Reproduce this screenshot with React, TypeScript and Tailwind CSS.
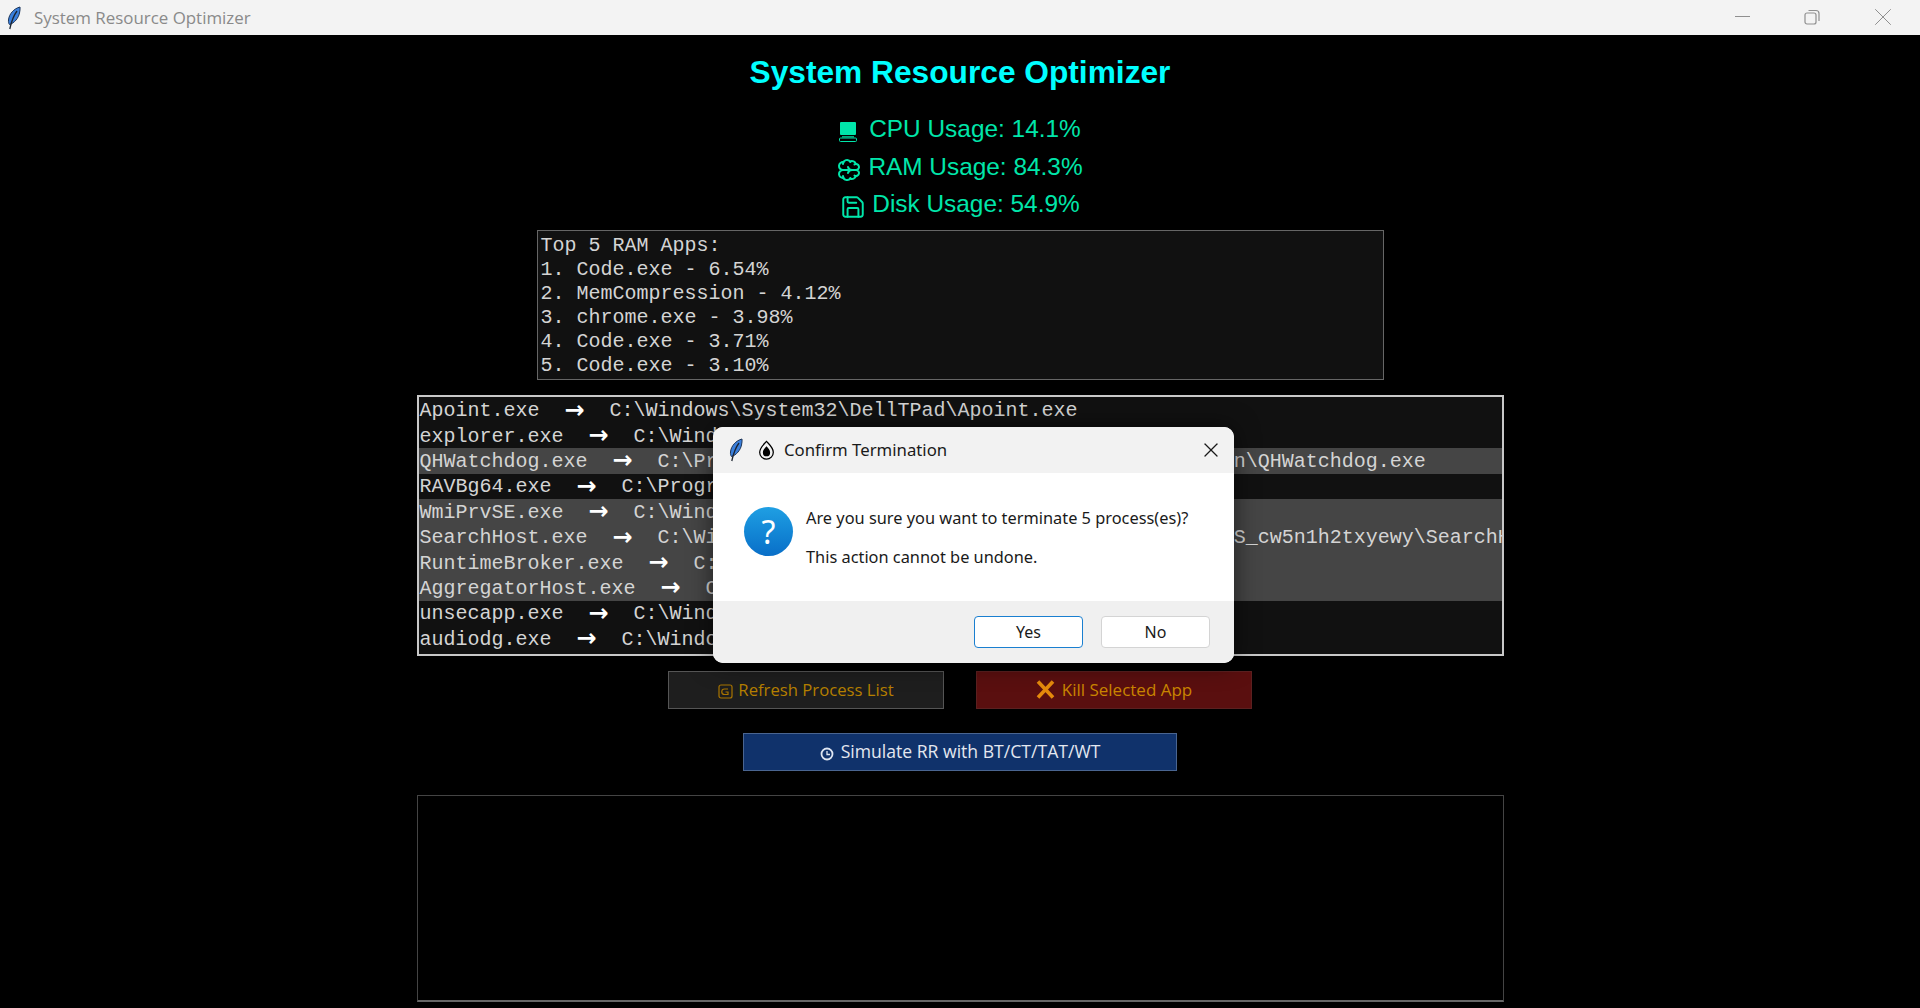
import { Brain, Save, X } from "lucide-react";

const topApps = ["Top 5 RAM Apps:", "1. Code.exe - 6.54%", "2. MemCompression - 4.12%", "3. chrome.exe - 3.98%", "4. Code.exe - 3.71%", "5. Code.exe - 3.10%"];

const processes = [
  { name: "Apoint.exe", path: "C:\\Windows\\System32\\DellTPad\\Apoint.exe", selected: false },
  { name: "explorer.exe", path: "C:\\Windows\\explorer.exe", selected: false },
  { name: "QHWatchdog.exe", path: "C:\\Program Files\\Quick Heal\\Quick Heal Tool Admin\\QHWatchdog.exe", selected: true },
  { name: "RAVBg64.exe", path: "C:\\Program Files\\Realtek\\Audio\\HDA\\RAVBg64.exe", selected: false },
  { name: "WmiPrvSE.exe", path: "C:\\Windows\\System32\\wbem\\WmiPrvSE.exe", selected: true },
  { name: "SearchHost.exe", path: "C:\\Windows\\SystemApps\\MicrosoftWindows.Client.CBS_cw5n1h2txyewy\\SearchHost.exe", selected: true },
  { name: "RuntimeBroker.exe", path: "C:\\Windows\\System32\\RuntimeBroker.exe", selected: true },
  { name: "AggregatorHost.exe", path: "C:\\Windows\\System32\\AggregatorHost.exe", selected: true },
  { name: "unsecapp.exe", path: "C:\\Windows\\System32\\wbem\\unsecapp.exe", selected: false },
  { name: "audiodg.exe", path: "C:\\Windows\\System32\\audiodg.exe", selected: false },
];

const Feather = ({ className }: { className: string }) => (
  <svg viewBox="0 0 16 24" className={className}>
    <path d="M14 1C8 2.500 3 8 2.500 14c-.2 2 .2 3.600 1 4.600C8.500 17 12.500 12 13.500 7c.4-2.200.8-4.200.5-6z" fill="#3a7fdc" stroke="#1d3558" strokeWidth="1" />
    <path d="M11 5C8 9 5.500 15 3.800 23" fill="none" stroke="#1c2430" strokeWidth="1.300" />
  </svg>
);

const App = () => {
  return (
    <div className="relative flex h-[1008px] w-full flex-col items-center overflow-hidden bg-black font-['Liberation_Sans',sans-serif]">
      {/* Window title bar */}
      <div className="flex h-[35px] w-full shrink-0 items-center bg-[#f3f3f3]">
        <Feather className="ml-[6px] h-[24px] w-[16px]" />
        <span className="ml-[12px] font-['Open_Sans',sans-serif] text-[16.900px] text-[#8a8a8a]">System Resource Optimizer</span>
        <div className="-mt-[2px] ml-auto flex items-center text-[#8f8f8f]">
          <div className="h-px w-[15px] bg-[#8f8f8f]" />
          <svg viewBox="0 0 16 16" className="ml-[54px] h-[16px] w-[16px]" fill="none" stroke="currentColor" strokeWidth="1.200">
            <rect x="1" y="4" width="11" height="11" rx="2" />
            <path d="M4.500 1.500h7.500a3 3 0 0 1 3 3v7.500" />
          </svg>
          <X className="mr-[22px] ml-[48px] h-[30px] w-[30px]" strokeWidth={0.8} />
        </div>
      </div>

      <h1 className="mt-[19px] h-[36px] text-[31.700px] leading-[36px] font-bold text-[#00ffff]">System Resource Optimizer</h1>

      {/* Usage stats */}
      <div className="mt-[21px] flex flex-col items-center text-[24.400px] text-[#00e6aa]">
        <div className="flex h-[37.500px] items-center gap-[12px]">
          <svg viewBox="0 0 18 20" className="mt-[5px] h-[20px] w-[18px]">
            <rect x="1" y="0" width="16" height="13" rx="1" fill="#00e6aa" />
            <rect x="3" y="14" width="12" height="1.500" fill="#00a87c" />
            <rect x="0.500" y="16" width="17" height="3.500" rx="1" fill="none" stroke="#00e6aa" strokeWidth="1" />
          </svg>
          <span>CPU Usage: 14.1%</span>
        </div>
        <div className="flex h-[37.500px] items-center gap-[7px]">
          <Brain className="mt-[5px] h-[24px] w-[24px] rotate-90" strokeWidth={2} />
          <span>RAM Usage: 84.3%</span>
        </div>
        <div className="flex h-[37.500px] items-center gap-[6px]">
          <Save className="mt-[5px] h-[26px] w-[26px]" strokeWidth={1.800} />
          <span>Disk Usage: 54.9%</span>
        </div>
      </div>

      {/* Top RAM apps */}
      <div className="mt-[6px] flex h-[150px] w-[847px] flex-col border border-[#666666] bg-[#111111] pt-[3px] pl-[3px] font-['Liberation_Mono',monospace] text-[20px] leading-[24px] text-[#d4d4d4]">
        {topApps.map((line) => (
          <div key={line} className="h-[24px] whitespace-pre">{line}</div>
        ))}
      </div>

      {/* Process list */}
      <div className="mt-[15px] h-[261px] w-[1087px] overflow-hidden border-[2px] border-[#c8c8c8] bg-[#111111] pt-px font-['Liberation_Mono',monospace] text-[20px] text-[#d4d4d4]">
        {processes.map((p) => (
          <div key={p.name} className={`flex h-[25.400px] items-center whitespace-pre pt-[2px] pl-[1px] ${p.selected ? "bg-[#454545]" : ""}`}>
            <span className="shrink-0">{p.name}</span>
            <span className="-mt-[3px] w-[70px] shrink-0 text-center font-['DejaVu_Sans',sans-serif] text-[24px] leading-none font-bold text-white">→</span>
            <span className="shrink-0">{p.path}</span>
          </div>
        ))}
      </div>

      {/* Action buttons */}
      <div className="mt-[15px] flex gap-[32px] font-['Open_Sans',sans-serif]">
        <button className="flex h-[38px] w-[276px] items-center justify-center gap-[5px] border border-[#555555] bg-[#1e1e1e] text-[16.700px] text-[#b57f00]">
          <svg viewBox="0 0 15 15" className="mt-[3px] h-[15px] w-[15px]" fill="none" stroke="#a87400" strokeWidth="1.200">
            <rect x="1" y="1" width="13" height="13" rx="2" />
            <path d="M10 5H6.500a2.500 2.500 0 0 0 0 5.500H10V8H7.500" />
          </svg>
          <span>Refresh Process List</span>
        </button>
        <button className="flex h-[38px] w-[276px] items-center justify-center gap-[7px] border border-[#5c2020] bg-[#5a0f0f] text-[17px] text-[#c98500]">
          <svg viewBox="0 0 19 19" className="h-[19px] w-[19px]" fill="none" stroke="#e58a0c" strokeWidth="3.600">
            <path d="M2 1.500l15 16M17 1.500l-15 16" />
          </svg>
          <span>Kill Selected App</span>
        </button>
      </div>
      <button className="mt-[24px] flex h-[38px] w-[434px] items-center justify-center gap-[7px] border border-[#4a6590] bg-[#10326b] font-['Open_Sans',sans-serif] text-[17.600px] text-[#e4e8f0]">
        <svg viewBox="0 0 14 14" className="mt-[4px] h-[14px] w-[14px]" fill="none" stroke="#dfe6f2" strokeWidth="1.800">
          <circle cx="7" cy="7" r="5.500" />
          <path d="M7 4v3.500h3" strokeWidth="1.300" />
        </svg>
        <span>Simulate RR with BT/CT/TAT/WT</span>
      </button>

      {/* Output box */}
      <div className="mt-[24px] h-[207px] w-[1087px] border border-[#444444] border-b-[2px] border-b-[#666666] bg-black" />

      {/* Confirm dialog */}
      <div className="absolute top-[427px] left-[713px] flex h-[236px] w-[521px] flex-col overflow-hidden rounded-[10px] bg-white font-['Noto_Sans',sans-serif] shadow-[0_0_24px_rgba(0,0,0,0.55)]">
        <div className="flex h-[46px] shrink-0 items-center bg-[#f2f2f2]">
          <Feather className="ml-[15px] h-[24px] w-[16px]" />
          <svg viewBox="0 0 18 22" className="ml-[14px] h-[20px] w-[17px]">
            <path d="M9 1.500C6 5 1.500 8.500 1.500 13.500a7.500 7.500 0 0 0 15 0C16.500 8.500 12 5 9 1.500z" fill="none" stroke="#000" strokeWidth="1.400" />
            <path d="M9 7C7 9.500 5 11 5 14a4 4 0 0 0 8 0c0-3-2-4.500-4-7z" fill="#000" />
          </svg>
          <span className="ml-[9px] text-[16.750px] text-[#1a1a1a]">Confirm Termination</span>
          <X className="mr-[11px] ml-auto h-[24px] w-[24px] text-[#1a1a1a]" strokeWidth={1.300} />
        </div>
        <div className="flex h-[128px] shrink-0 bg-white pt-[34px] pl-[31px]">
          <div className="flex h-[49px] w-[49px] items-center justify-center rounded-full bg-gradient-to-b from-[#1f9fe3] to-[#0a6fc8] text-[32px] leading-none text-white">?</div>
          <div className="-mt-[8px] ml-[13px] text-[16.350px] text-[#1a1a1a]">
            <p className="h-[38.500px] leading-[38px]">Are you sure you want to terminate 5 process(es)?</p>
            <p className="h-[38.500px] leading-[38px]">This action cannot be undone.</p>
          </div>
        </div>
        <div className="flex flex-1 items-start justify-end gap-[18px] bg-[#f0f0f0] pt-[15px] pr-[24px] text-[16px] text-[#1a1a1a]">
          <button className="h-[32px] w-[109px] rounded-[4px] border-[1.500px] border-[#1a7fd0] bg-white">Yes</button>
          <button className="h-[32px] w-[109px] rounded-[4px] border border-[#d4d4d4] bg-white">No</button>
        </div>
      </div>
    </div>
  );
};

export default App;
